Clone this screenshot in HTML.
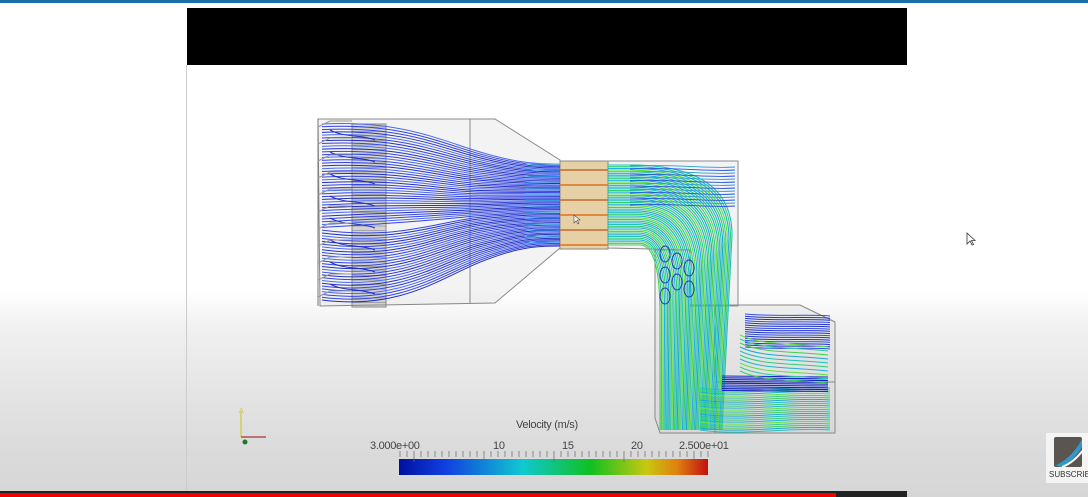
<!DOCTYPE html>
<html><head><meta charset="utf-8"><style>
html,body{margin:0;padding:0;width:1088px;height:497px;overflow:hidden}
body{position:relative;background:linear-gradient(#fff 0,#fff 290px,#f0f0f0 330px,#dcdcdc 440px,#d6d6d6 497px);font-family:"Liberation Sans",sans-serif}
.top{position:absolute;left:0;top:0;width:1088px;height:3px;background:#1a6fa8}
.black{position:absolute;left:187px;top:8px;width:720px;height:57px;background:#000}
.lline{position:absolute;left:186px;top:65px;width:1px;height:427px;background:#ccc}
.bar{position:absolute;left:0;top:491px;width:907px;height:6px;background:#222}
.red{position:absolute;left:0;top:493px;width:836px;height:4px;background:#e00}
.t{position:absolute;font-size:11px;color:#444;letter-spacing:-0.3px}
.sub{position:absolute;left:1046px;top:433px;width:42px;height:50px;background:#f4f4f4}
</style></head><body>
<div class="top"></div>
<div class="black"></div>
<div class="lline"></div>
<svg id="s" width="1088" height="497" style="position:absolute;left:0;top:0">
<defs>
<linearGradient id="cb" x1="0" x2="1"><stop offset="0" stop-color="#0010a0"/><stop offset="0.15" stop-color="#1040e0"/><stop offset="0.4" stop-color="#10c8d0"/><stop offset="0.62" stop-color="#10c020"/><stop offset="0.8" stop-color="#c8c810"/><stop offset="0.9" stop-color="#e08010"/><stop offset="1" stop-color="#c01010"/></linearGradient>
</defs>
<g id="geo" fill="rgba(200,200,200,0.22)" stroke="#888" stroke-width="1">
<polygon points="318,119 495,119 560,160 560,248 495,303 320,306"/>
<rect x="352" y="124" width="34" height="183" fill="rgba(140,140,140,0.3)"/>
<rect x="560" y="161" width="48" height="88" fill="rgba(220,190,130,0.7)"/>
<polygon points="608,161 738,161 738,306 690,306 690,250 608,248"/>
<polygon points="655,250 690,250 690,305 800,305 835,322 835,433 800,433 660,433 655,418"/>
<line x1="470" y1="119" x2="470" y2="303"/>
<line x1="715" y1="305" x2="715" y2="433"/>
<line x1="715" y1="382" x2="835" y2="382"/>
</g>
<g id="sl" fill="none" stroke-width="1"></g>
<g fill="none" stroke="#777" stroke-width="1">
<line x1="318" y1="119" x2="318" y2="306"/>
</g>
<g id="fins" stroke="#999" fill="none"></g>
<g stroke-width="1.3"><line x1="241" y1="412" x2="241" y2="437" stroke="#cc4"/><line x1="241" y1="437" x2="266" y2="437" stroke="#a33"/></g>
<circle cx="245" cy="442" r="2.5" fill="#1a7a2a"/>
<text x="239" y="413" font-size="7" fill="#cc4">A</text>
<rect x="399" y="459" width="309" height="16" fill="url(#cb)"/>
<g id="ticks" stroke="#666" stroke-width="0.7"></g>
<g transform="translate(967,233)"><path d="M0,0 L0,11 L3,8 L5,12 L6.5,11.5 L4.5,7.5 L8,7.5 Z" fill="#fff" stroke="#333" stroke-width="0.8"/></g>
<path d="M574,215 l0,8 l2,-2 l2,3 l1,-1 l-2,-3 l3,0z" fill="#fff" stroke="#543" stroke-width="0.6"/>
</svg>
<div class="t" style="left:516px;top:419px;">Velocity (m/s)</div>
<div class="t" style="left:370px;top:440px;">3.000e+00</div>
<div class="t" style="left:493px;top:440px;">10</div>
<div class="t" style="left:562px;top:440px;">15</div>
<div class="t" style="left:631px;top:440px;">20</div>
<div class="t" style="left:679px;top:440px;">2.500e+01</div>
<div class="bar"></div><div class="red"></div>
<div class="sub">
<svg width="42" height="36" style="position:absolute;left:6px;top:4px"><rect x="2" y="0" width="28" height="30" rx="2" fill="#5a5550"/><path d="M4,28 C14,24 24,14 30,2 L30,10 C24,20 16,27 8,30Z" fill="#2e9acb"/><path d="M10,30 C18,27 26,20 32,12" stroke="#fff" stroke-width="2" fill="none"/></svg>
<div style="position:absolute;left:3px;top:37px;font-size:8px;color:#333">SUBSCRIB</div>
</div>
<script>
var ns="http://www.w3.org/2000/svg",sl=document.getElementById('sl');
function P(d,c,w){var p=document.createElementNS(ns,'path');p.setAttribute('d',d);p.setAttribute('stroke',c);p.setAttribute('stroke-width',w||1);sl.appendChild(p);}
var N=64;
for(var i=0;i<N;i++){var f=i/(N-1);var y0=124+f*176,y1=164+f*82;var c=i%4==0?'#4a6af0':(i%3?'#3444e0':'#2430c0');
var m=y0+(y1-y0)*0.4+Math.sin(f*6.28)*4;
P('M322,'+y0+' C400,'+(y0+(f>0.6?10:-4))+' 440,'+m+' 480,'+((m+y1)/2)+' S540,'+y1+' 560,'+y1,c,1);}
for(var i=0;i<14;i++){var y=164+i*6;P('M525,'+y+' L560,'+y,i%2?'#30a0e8':'#30c0d8',1.1);}
for(var i=0;i<8;i++){var y=130+i*22;P('M330,'+y+' C345,'+(y+8)+' 360,'+(y+4)+' 375,'+(y+10),'#2030c0',1);}
for(var i=0;i<6;i++){var y=170+i*15;P('M560,'+y+' L608,'+y,i%2?'#e07020':'#c06a30',1.4);}
var cols=['#20c0c0','#30d070','#20b0e0','#60e040','#30c8a0','#40d050','#18a8d8'];
var M=48;
for(var i=0;i<M;i++){var f=i/(M-1);var y=165+f*80,x=732-f*72;
P('M608,'+y+' L'+(630+f*10)+','+y+' Q'+x+','+y+' '+x+','+(y+70)+' L'+(x+(1-f)*-10)+',430',cols[i%7],1.1);}
for(var i=0;i<14;i++){var y=166+i*3;P('M630,'+y+' C680,'+(y-2)+' 710,'+(y+3)+' 735,'+(y+1),i%2?'#2050e0':'#20a0d8',0.9);}
for(var i=0;i<7;i++){var cx=665+(i%3)*12,cy=262+i*7;P('M'+cx+','+cy+' a5,8 0 1,1 0.1,0','#2030c0',0.9);}
for(var i=0;i<22;i++){var y=388+i*2;P('M700,'+y+' C740,'+(y+6)+' 790,'+(y-3)+' 830,'+y,cols[i%7],1);}
for(var i=0;i<16;i++){var y=314+i*2.2;P('M745,'+y+' C780,'+(y+3)+' 805,'+y+' 830,'+(y+2),i%3?'#2030d0':'#3050e0',1);}
for(var i=0;i<9;i++){var y=376+i*1.8;P('M722,'+y+' L828,'+(y+1),'#1828c8',1.1);}
for(var i=0;i<10;i++){var y=335+i*4;P('M740,'+y+' C760,'+(y+10)+' 790,'+(y+8)+' 828,'+(y+12),cols[(i+3)%7],1);}
var f=document.getElementById('fins');
for(var i=0;i<11;i++){var y=121+i*17;var l=document.createElementNS(ns,'path');l.setAttribute('d','M318,'+(y+6)+' L330,'+y+' L352,'+y);f.appendChild(l);}
var g=document.getElementById('geo');
for(var i=0;i<40;i++){var l=document.createElementNS(ns,'line');var y=127+i*4.5;l.setAttribute('x1',352);l.setAttribute('x2',386);l.setAttribute('y1',y);l.setAttribute('y2',y);l.setAttribute('stroke','#777');l.setAttribute('stroke-width','0.5');g.appendChild(l);}
var t=document.getElementById('ticks');
for(var i=0;i<=44;i++){var x=400+i*7;var l=document.createElementNS(ns,'line');l.setAttribute('x1',x);l.setAttribute('x2',x);l.setAttribute('y1',451);l.setAttribute('y2',i%10==2?462:457);t.appendChild(l);}
</script>
</body></html>
